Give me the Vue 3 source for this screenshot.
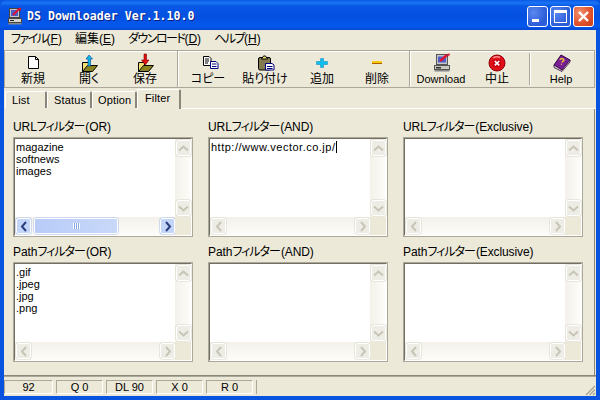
<script setup>
const menus = [
  { kana: 'ファイル', key: 'F' },
  { plain: '編集', key: 'E' },
  { kana: 'ダウンロード', key: 'D' },
  { kana: 'ヘルプ', key: 'H' }
]
const tools = [
  [{ t: '新規', i: 'new', w: 56 }, { t: '開く', i: 'open', w: 56 }, { t: '保存', i: 'save', w: 56 }],
  [{ t: 'コピー', i: 'copy', w: 54 }, { t: '貼り付け', i: 'paste', w: 60 }, { t: '追加', i: 'add', w: 54 }, { t: '削除', i: 'del', w: 56 }],
  [{ t: 'Download', i: 'dl', w: 56, latin: true }, { t: '中止', i: 'stop', w: 56 }],
  [{ t: 'Help', i: 'help', w: 56, latin: true }]
]
const tabs = ['List', 'Status', 'Option', 'Filter']
const filters = [
  { pre: 'URL', post: '(OR)', lines: ['magazine', 'softnews', 'images'], active: true },
  { pre: 'URL', post: '(AND)', lines: ['http://www.vector.co.jp/'], caret: true },
  { pre: 'URL', post: '(Exclusive)', lines: [] },
  { pre: 'Path', post: '(OR)', lines: ['.gif', '.jpeg', '.jpg', '.png'] },
  { pre: 'Path', post: '(AND)', lines: [] },
  { pre: 'Path', post: '(Exclusive)', lines: [] }
]
const status = ['92', 'Q 0', 'DL 90', 'X 0', 'R 0']
</script>

<template>
  <div class="window">
    <header class="titlebar">
      <svg class="appicon" width="16" height="18" viewBox="0 0 16 18">
        <rect x="2.500" y="1.500" width="10" height="9" fill="#c4c4cc" stroke="#444"/>
        <rect x="4" y="3" width="7" height="6" fill="#4a60c8"/>
        <path d="M6 8l6-6" stroke="#e01030" stroke-width="2"/>
        <path d="M11 1.500l3.500-1-1 3.500z" fill="#e01030"/>
        <rect x="1.500" y="11.500" width="13" height="4" fill="#d4d4cc" stroke="#444"/>
        <rect x="3" y="13" width="4" height="1" fill="#222"/>
        <rect x="1.500" y="16" width="13" height="1.500" fill="#8a8a8a"/>
      </svg>
      <span class="title">DS Downloader Ver.1.10.0</span>
      <div class="caption">
        <button class="cap blue"><i class="min"></i></button>
        <button class="cap blue"><i class="max"></i></button>
        <button class="cap red">
          <svg width="13" height="13" viewBox="0 0 13 13"><path d="M2 2l9 9M11 2l-9 9" stroke="#fff" stroke-width="2.4"/></svg>
        </button>
      </div>
    </header>

    <div class="client">
      <nav class="menu">
        <span v-for="m in menus" :key="m.key" class="menuitem"><span v-if="m.kana" class="kana">{{ m.kana }}</span>{{ m.plain }}(<u>{{ m.key }}</u>)</span>
      </nav>

      <div class="toolbar">
        <template v-for="(group, gi) in tools" :key="gi">
          <i v-if="gi" class="sep" :class="{ short: gi === 3 }"></i>
          <div v-for="b in group" :key="b.t" class="tool" :style="{ width: b.w + 'px' }">
            <svg class="ticon" width="24" height="20" viewBox="0 0 24 20">
              <template v-if="b.i === 'new'">
                <path d="M7.500 4.500h7l3 3v9h-10z" fill="#fff" stroke="#000"/>
                <path d="M14.500 4.500v3h3" fill="none" stroke="#000"/>
              </template>
              <g v-else-if="b.i === 'open' || b.i === 'save'" transform="translate(1 1)">
                <path d="M4.500 18.500v-9h6v9z" fill="#f4e070" stroke="#000"/>
                <path d="M4.500 18.500l5-6h10l-5 6z" fill="#8a8420" stroke="#000"/>
                <path v-if="b.i === 'open'" d="M11 2l-3 4h2v7h2.500v-7h2z" fill="#10b8e0" stroke="#0040a0" stroke-width=".6"/>
                <path v-else d="M10 1h2.500v6h2.500l-3.700 5-3.800-5h2.500z" fill="#e01010" stroke="#800000" stroke-width=".6"/>
              </g>
              <template v-else-if="b.i === 'copy'">
                <path d="M7.500 4.500h5.500l2 2v7h-7.500z" fill="#fff" stroke="#000"/>
                <path d="M9 7h4M9 9h4M9 11h3" stroke="#000"/>
                <path d="M14.500 9.500h5.500l2 2v5h-7.500z" fill="#fff" stroke="#000080"/>
                <path d="M16 12h4.500M16 14.500h4.500" stroke="#000080"/>
              </template>
              <template v-else-if="b.i === 'paste'">
                <rect x="5.500" y="5.500" width="12" height="12.500" rx="1.500" fill="#847a50" stroke="#000"/>
                <path d="M8.500 7l2-3h2l2 3z" fill="#f0e070" stroke="#000"/>
                <path d="M12.500 11.500h6.500l2 1.500v5h-8.500z" fill="#fff" stroke="#000080"/>
                <path d="M14 14.500h5.500M14 16.500h5.500" stroke="#000080"/>
              </template>
              <template v-else-if="b.i === 'add'">
                <path d="M10.500 6.500h3v3h4v3h-4v3h-3v-3h-4v-3h4z" fill="#10c0f0" stroke="#0880c0" stroke-width=".5"/>
              </template>
              <template v-else-if="b.i === 'del'">
                <rect x="7" y="9" width="10" height="3" fill="#f8c810"/>
                <rect x="7" y="11" width="10" height="1" fill="#a86000"/>
              </template>
              <g v-else-if="b.i === 'dl'" transform="translate(2 1)">
                <rect x="5.500" y="1.500" width="11" height="10" fill="#c4c4cc" stroke="#555"/>
                <rect x="7" y="3.500" width="8" height="6" fill="#4a60c8"/>
                <path d="M9 8l7-6" stroke="#e01030" stroke-width="2.400"/>
                <path d="M16 1l3-.5-1 3z" fill="#e01030"/>
                <rect x="3.500" y="12.500" width="15" height="4" fill="#c8c8c0" stroke="#555"/>
                <rect x="5" y="14" width="5" height="1.500" fill="#333"/>
                <rect x="3.500" y="17" width="15" height="1.500" fill="#888"/>
              </g>
              <g v-else-if="b.i === 'stop'" transform="translate(0 1.500)">
                <circle cx="12" cy="9.500" r="8" fill="#e01018" stroke="#900008"/>
                <path d="M8 4.500a6 5 0 0 1 7-.5" stroke="#ff9090" stroke-width="1.500" fill="none"/>
                <rect x="8" y="6" width="8" height="7.500" rx="2" fill="#c80010"/>
                <path d="M9.800 7.500l4.400 4.400M14.200 7.500l-4.400 4.400" stroke="#fff" stroke-width="1.700"/>
              </g>
              <g v-else transform="translate(0 1)">
                <path d="M5 12l7-10 9 5-8 10z" fill="#7a1f96" stroke="#300040"/>
                <path d="M5 12v2.500l8 4 8-9.500v-2l-8 10z" fill="#d8d8d8" stroke="#300040" stroke-width=".8"/>
                <path d="M11 7a2 1.500 0 1 1 2.500 1.500l-.6 1" fill="none" stroke="#f8d820" stroke-width="1.300"/>
                <path d="M12 11l.8.4" stroke="#f8d820" stroke-width="1.300"/>
              </g>
            </svg>
            <span class="tlabel" :class="{ latin: b.latin }">{{ b.t }}</span>
          </div>
        </template>
      </div>

      <div class="tabs">
        <span v-for="t in tabs" :key="t" class="tab" :class="[t.toLowerCase(), { selected: t === 'Filter' }]">{{ t }}</span>
        <span class="tabfill"></span>
      </div>

      <main class="panel">
        <section v-for="f in filters" :key="f.pre + f.post" class="filter">
          <label class="flabel">{{ f.pre }}<span class="kana">フィルター</span>{{ f.post }}</label>
          <div class="listbox">
            <div class="textarea">
              <div v-for="l in f.lines" :key="l" class="line" :class="{ url: f.caret }">{{ l }}<i v-if="f.caret" class="caret"></i></div>
            </div>
            <div class="vbar">
              <span class="sbtn"><svg width="11" height="7" viewBox="0 0 11 7"><path d="M1 5.500l4.500-4 4.500 4" fill="none" stroke="#c8c5b6" stroke-width="2"/></svg></span>
              <span class="sbtn"><svg width="11" height="7" viewBox="0 0 11 7"><path d="M1 1.500l4.500 4 4.500-4" fill="none" stroke="#c8c5b6" stroke-width="2"/></svg></span>
            </div>
            <div class="hbar" :class="{ active: f.active }">
              <span class="sbtn hb"><svg width="8" height="11" viewBox="0 0 8 11"><path d="M6 1L2 5.500l4 4.500" fill="none" :stroke="f.active ? '#2a4080' : '#c8c5b6'" stroke-width="2"/></svg></span>
              <span v-if="f.active" class="thumb"><i></i></span>
              <span class="hfill"></span>
              <span class="sbtn hb"><svg width="8" height="11" viewBox="0 0 8 11"><path d="M2 1l4 4.500L2 10" fill="none" :stroke="f.active ? '#2a4080' : '#c8c5b6'" stroke-width="2"/></svg></span>
            </div>
            <div class="corner"></div>
          </div>
        </section>
      </main>

      <footer class="statusbar">
        <span v-for="s in status" :key="s" class="cell">{{ s }}</span>
        <span class="cell last"></span>
        <svg class="grip" width="12" height="12" viewBox="0 0 12 12">
          <path d="M11 2L2 11M11 5.500L5.500 11M11 9L9 11" stroke="#a8a594" stroke-width="1.400"/>
        </svg>
      </footer>
    </div>
  </div>
</template>

<style>
html, body { margin: 0; background: #0a50e0; }
</style>

<style scoped>
.window {
  width: 600px;
  height: 400px;
  box-sizing: border-box;
  display: flex;
  flex-direction: column;
  background: #0854e0;
  padding: 0 4px 4px;
  font-family: "Liberation Sans", "Noto Sans CJK JP", sans-serif;
  font-feature-settings: "palt";
  font-size: 12px;
  color: #000;
  overflow: hidden;
}
.titlebar {
  height: 30px;
  box-sizing: border-box;
  margin: 0 -4px;
  padding: 2px 6px 0 7px;
  flex: none;
  display: flex;
  align-items: center;
  background: linear-gradient(#0a5ae6 0, #1a74f4 3px, #0858e6 6px, #0450e0 16px, #0458ee 26px, #0448d4 30px);
  border-radius: 7px 7px 0 0;
}
.appicon { margin-right: 4px; flex: none; }
.title {
  font-family: "DejaVu Sans Mono", monospace;
  font-size: 11.6px;
  font-weight: 700;
  color: #fff;
  text-shadow: 1px 1px 0 #0a1f80;
  white-space: pre;
}
.caption { margin-left: auto; display: flex; gap: 2px; }
.cap {
  width: 21px;
  height: 21px;
  padding: 0;
  box-sizing: border-box;
  border: 1px solid #fff;
  border-radius: 3px;
  display: flex;
  align-items: center;
  justify-content: center;
  position: relative;
}
.blue { background: radial-gradient(circle at 30% 30%, #5a88f0, #2a5cd8 70%, #3464dc); }
.red { background: radial-gradient(circle at 30% 30%, #f09070, #e0502a 60%, #c83c14); }
.min { position: absolute; left: 4px; bottom: 4px; width: 7px; height: 3px; background: #fff; }
.max { width: 11px; height: 9px; border: 1px solid #fff; border-top-width: 3px; box-sizing: content-box; }
.client {
  flex: 1;
  min-height: 0;
  display: flex;
  flex-direction: column;
  background: #ece9d8;
}
.menu {
  height: 19px;
  flex: none;
  display: flex;
  align-items: center;
  gap: 13px;
  padding-left: 7px;
  font-size: 12px;
}
.menuitem { line-height: 19px; white-space: nowrap; }
.menuitem .kana { letter-spacing: -1.500px; }
.toolbar {
  height: 38px;
  flex: none;
  box-sizing: border-box;
  margin-top: 1px;
  margin-right: 1px;
  border: 1px solid #aca899;
  box-shadow: inset 0 1px 0 #fff;
  display: flex;
  align-items: stretch;
}
.sep { width: 1px; margin: 0 3px 0 4px; background: #aca899; box-shadow: 1px 0 0 #fff; }
.sep.short { margin-top: 2px; margin-bottom: 2px; }
.tool { display: flex; flex-direction: column; align-items: center; flex: none; padding-top: 1px; box-sizing: border-box; }
.ticon { display: block; flex: none; }
.tlabel { font-size: 12px; line-height: 14px; white-space: nowrap; }
.tlabel.latin { font-size: 11px; }
.tabs {
  height: 21px;
  flex: none;
  display: flex;
  align-items: flex-end;
  padding-left: 1px;
}
.tab {
  box-sizing: border-box;
  height: 17px;
  line-height: 16px;
  padding-left: 6px;
  border-top: 1px solid #fff;
  border-left: 1px solid #fff;
  border-right: 2px solid #8a8778;
  border-radius: 2px 2px 0 0;
  background: #ece9d8;
  margin-bottom: 1px;
  font-size: 11px;
  letter-spacing: .15px;
}
.tab.list { width: 42px; }
.tab.status { width: 45px; }
.tab.option { width: 45px; padding-left: 5px; }
.tab.filter { width: 44px; padding-left: 7px; }
.tab.selected { height: 20px; line-height: 16px; margin-bottom: 0; }
.tabfill { flex: 1; border-bottom: 1px solid #fff; align-self: flex-end; }
.panel {
  flex: 1;
  min-height: 0;
  display: grid;
  grid-template-columns: repeat(3, 180px);
  column-gap: 15px;
  grid-template-rows: 125px 120px;
  padding: 12px 0 0 9px;
  border-right: 1px solid #8a8778;
  margin-right: 1px;
}
.filter { display: flex; flex-direction: column; }
.flabel { height: 16px; line-height: 12px; font-size: 12px; white-space: nowrap; letter-spacing: -.1px; }
.flabel .kana { letter-spacing: -1px; margin-right: 1px; }
.listbox {
  box-sizing: border-box;
  width: 180px;
  height: 100px;
  background: #fff;
  border: 2px solid;
  border-color: #716f64 #fff #fff #716f64;
  outline: 1px solid #aca899;
  outline-offset: -1px;
  display: grid;
  grid-template-columns: 1fr 16px;
  grid-template-rows: 1fr 18px;
}
.textarea { padding: 2px 0 0 1px; font-size: 11px; line-height: 12px; min-width: 0; overflow: hidden; white-space: nowrap; }
.line { height: 12px; }
.line.url { letter-spacing: .5px; }
.caret { display: inline-block; width: 1px; height: 12px; background: #000; vertical-align: top; }
.vbar {
  display: flex;
  flex-direction: column;
  justify-content: space-between;
  background: linear-gradient(90deg, #f3f1ea, #fdfcf8);
  padding: 1px 0;
  margin-right: 1px;
  box-sizing: border-box;
}
.sbtn {
  box-sizing: border-box;
  width: 15px;
  height: 16px;
  margin-left: 1px;
  display: flex;
  align-items: center;
  justify-content: center;
  background: #eeede5;
  border: 1px solid #fff;
  border-radius: 2px;
  box-shadow: 0 0 0 .5px #d8d5c6;
  flex: none;
}
.hbar {
  display: flex;
  align-items: stretch;
  padding: 1px 0;
  box-sizing: border-box;
  background: linear-gradient(#f3f1ea, #fdfcf8);
  min-width: 0;
}
.sbtn.hb { height: 16px; }
.hbar.active .sbtn { background: #c4d5fa; box-shadow: 0 0 0 .5px #a8bcec; }
.thumb {
  width: 84px;
  margin-left: 3px;
  box-sizing: border-box;
  background: linear-gradient(90deg, #b8ccf8, #c8d8fa);
  border: 1px solid #fff;
  border-radius: 2px;
  box-shadow: 0 0 0 .5px #a8bcec;
  display: flex;
  align-items: center;
  justify-content: center;
}
.thumb i {
  width: 7px;
  height: 6px;
  background: repeating-linear-gradient(90deg, #fff 0 1px, #8ca6e6 1px 2px);
}
.hfill { flex: 1; }
.corner { background: #ece9d8; }
.statusbar {
  height: 20px;
  margin-top: auto;
  flex: none;
  display: flex;
  gap: 3px;
  position: relative;
  box-sizing: border-box;
  padding: 3px 0 2px 0;
  border-top: 1px solid #aca899;
  box-shadow: 0 -1px 0 #8a8778;
}
.cell {
  box-sizing: border-box;
  width: 47px;
  border: 1px solid;
  border-color: #aca899 #fff #fff #aca899;
  text-align: center;
  line-height: 13px;
  font-size: 11px;
}
.cell:first-child { width: 49px; }
.cell.last { flex: 1; border-right: 0; border-bottom: 0; border-top: 0; }
.grip { position: absolute; right: 0; bottom: 0; }
</style>
